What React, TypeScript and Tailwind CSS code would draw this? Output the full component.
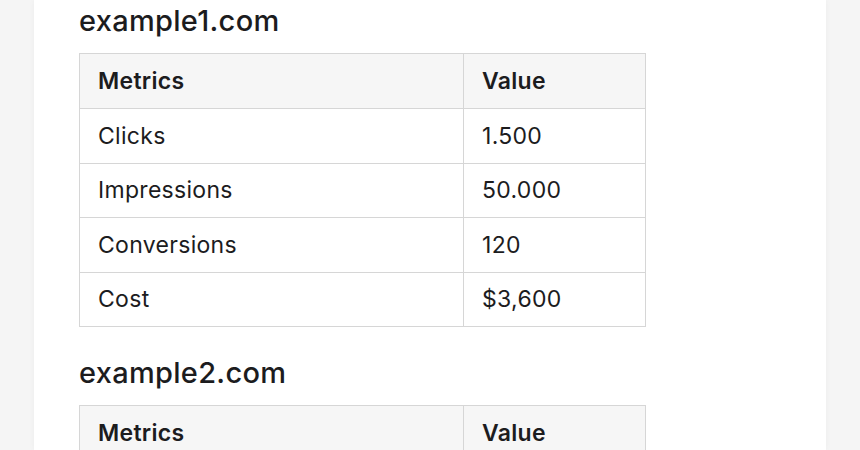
const SITES = [
  {
    name: "example1.com",
    rows: [
      ["Clicks", "1.500"],
      ["Impressions", "50.000"],
      ["Conversions", "120"],
      ["Cost", "$3,600"],
    ],
  },
  {
    name: "example2.com",
    rows: [
      ["Clicks", "980"],
      ["Impressions", "32.000"],
      ["Conversions", "75"],
      ["Cost", "$2,100"],
    ],
  },
];

export default function App() {
  return (
    <div className="h-[450px] overflow-hidden bg-[#f5f5f5] font-['Inter',sans-serif] text-[#1c1c1e]">
      <main className="mx-[34px] h-full bg-white px-[45px] pt-[4px] shadow-[0_0_6px_rgba(0,0,0,0.04)]">
        {SITES.map((site) => (
          <section key={site.name} className="mb-[29px]">
            <h2 className="mb-[15px] text-[29px] leading-[34px] font-medium tracking-[0.3px]">{site.name}</h2>
            <table className="w-[567px] border-collapse text-[23px] tracking-[0.3px]">
              <thead>
                <tr className="bg-[#f6f6f6]">
                  <th className="h-[55px] w-[384px] border border-[#d6d6d6] pl-[18px] text-left font-semibold">Metrics</th>
                  <th className="h-[55px] border border-[#d6d6d6] pl-[18px] text-left font-semibold">Value</th>
                </tr>
              </thead>
              <tbody>
                {site.rows.map(([metric, value]) => (
                  <tr key={metric}>
                    <td className="h-[54.5px] border border-[#d6d6d6] pl-[18px]">{metric}</td>
                    <td className="h-[54.5px] border border-[#d6d6d6] pl-[18px]">{value}</td>
                  </tr>
                ))}
              </tbody>
            </table>
          </section>
        ))}
      </main>
    </div>
  );
}
